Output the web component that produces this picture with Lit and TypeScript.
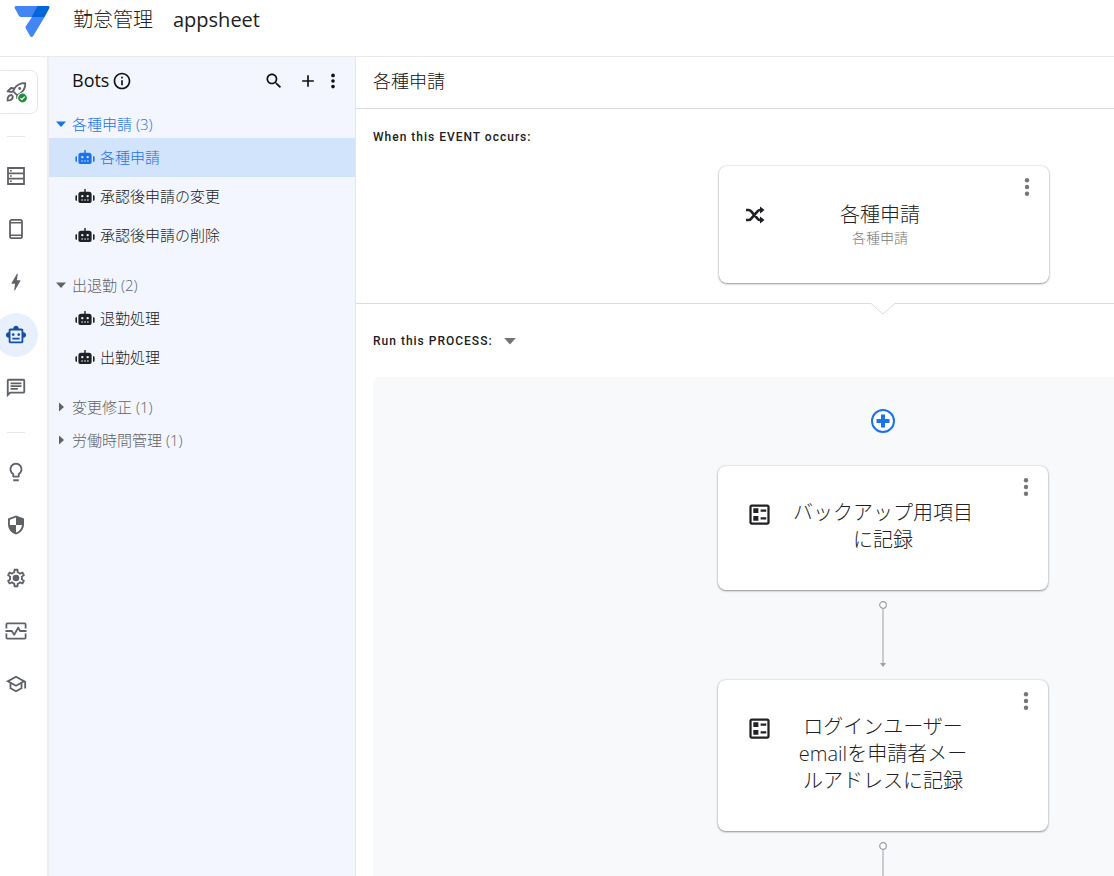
import { LitElement, html, svg, css, nothing, type TemplateResult } from "lit";
import { customElement, property, state } from "lit/decorators.js";
import { classMap } from "lit/directives/class-map.js";

/* ---------- icons ---------- */

interface Glyph {
  box: string;
  body: TemplateResult;
}

const ICONS: Record<string, Glyph> = {
  logo: {
    box: "0 0 36 33",
    body: svg`
      <path fill="#4285f4" d="M2 1h22l-6 11H6.500L5 11 .8 3.200C.2 2 .8 1 2 1z"/>
      <path fill="#0066da" d="M23.500 1h10.800c1.100 0 1.600 1 1.100 2l-4.800 9H17.500z"/>
      <path fill="#4285f4" d="M18 12h12.600L19.200 31c-.8 1.300-2.400 1.300-3.100 0l-4.300-7.600c-.4-.8-.4-1.500 0-2.200z"/>`,
  },
  rocket: {
    box: "0 0 22 22",
    body: svg`
      <g fill="none" stroke="#5f6368" stroke-width="1.800" stroke-linejoin="round">
        <path d="M20.300 2.200c-4.500-.2-8.500 1.800-10.900 5.400l-1.400 2.600 4 4 2.700-1.400c3.400-2.400 5.800-5.900 5.600-10.600z"/>
        <path d="M9.500 7.500 6 7 2.500 10.400l5.200.6M12 14.600l.2 3.400"/>
        <path d="M6.500 14c-2.600 0-4 1.500-4 5.500 4 0 5.300-1.500 5.300-4z"/>
      </g>
      <circle cx="14.700" cy="7.500" r="1.400" fill="#5f6368"/>
      <circle cx="17.500" cy="17" r="5.400" fill="#fff"/>
      <circle cx="17.500" cy="17" r="4.400" fill="#1e8e3e"/>
      <path d="m15.400 17.100 1.500 1.500 2.800-2.900" fill="none" stroke="#fff" stroke-width="1.200"/>`,
  },
  data: {
    box: "0 0 22 22",
    body: svg`
      <path fill="none" stroke="currentColor" stroke-width="1.800" d="M3 3h16v16H3zM3 8.300h16M3 13.700h16"/>
      <path d="M5 4.900h1.800v1.600H5zM5 10.200h1.800v1.600H5zM5 15.500h1.800v1.600H5z"/>`,
  },
  phone: {
    box: "0 0 22 22",
    body: svg`
      <rect x="5" y="1.900" width="12" height="18.200" rx="1.600" fill="none" stroke="currentColor" stroke-width="1.800"/>
      <path d="M5 4.800h12M5 17.200h12" stroke="currentColor" stroke-width="1.400"/>`,
  },
  bolt: {
    box: "0 0 24 24",
    body: svg`<path d="M11 21h-1l1-7H7.500c-.58 0-.57-.32-.38-.66l.07-.12C8.480 10.940 10.420 7.540 13 3h1l-1 7h3.500c.49 0 .56.33.47.51l-.07.15C12.960 17.550 11 21 11 21z"/>`,
  },
  bot: {
    box: "0 0 24 24",
    body: svg`<path d="M20 9V7c0-1.100-.9-2-2-2h-3c0-1.660-1.340-3-3-3S9 3.340 9 5H6c-1.100 0-2 .9-2 2v2c-1.660 0-3 1.340-3 3s1.340 3 3 3v4c0 1.100.9 2 2 2h12c1.100 0 2-.9 2-2v-4c1.660 0 3-1.340 3-3s-1.340-3-3-3zm-2 10H6V7h12v12zm-9-6c-.83 0-1.500-.67-1.500-1.500S8.170 10 9 10s1.500.67 1.500 1.500S9.830 13 9 13zm7.500-1.500c0 .83-.67 1.500-1.500 1.500s-1.500-.67-1.500-1.500.67-1.500 1.500-1.500 1.500.67 1.500 1.500zM8 15h8v2H8v-2z"/>`,
  },
  chat: {
    box: "0 0 24 24",
    body: svg`<path d="M4 4h16v12H5.170L4 17.170V4m0-2c-1.100 0-1.990.9-1.990 2L2 22l4-4h14c1.100 0 2-.9 2-2V4c0-1.100-.9-2-2-2H4zm2 10h8v2H6v-2zm0-3h12v2H6V9zm0-3h12v2H6V6z"/>`,
  },
  bulb: {
    box: "0 0 24 24",
    body: svg`<path d="M9 20h6v2H9zm3-18C8.140 2 5 5.140 5 9c0 2.380 1.190 4.470 3 5.740V17c0 .55.45 1 1 1h6c.55 0 1-.45 1-1v-2.260c1.810-1.270 3-3.360 3-5.740 0-3.860-3.140-7-7-7zm2.850 11.100l-.85.6V16h-4v-2.300l-.85-.6C7.800 12.160 7 10.630 7 9c0-2.760 2.240-5 5-5s5 2.240 5 5c0 1.630-.8 3.160-2.150 4.100z"/>`,
  },
  shield: {
    box: "0 0 22 22",
    body: svg`<path fill-rule="evenodd" d="M11 1.500 3 4.500v5.800c0 4.900 3.400 9 8 10.200 4.600-1.200 8-5.300 8-10.200V4.500zM11 3.500V11H4.900V5.800zM11 11h6c-.4 3.500-2.800 6.500-6 7.600z"/>`,
  },
  gear: {
    box: "0 0 24 24",
    body: svg`
      <path d="M19.430 12.980c.04-.32.07-.64.07-.98s-.03-.66-.07-.98l2.110-1.650c.19-.15.24-.42.12-.64l-2-3.460c-.09-.16-.26-.25-.44-.25-.06 0-.12.01-.17.03l-2.490 1c-.52-.4-1.080-.73-1.690-.98l-.38-2.650C14.460 2.180 14.250 2 14 2h-4c-.25 0-.46.18-.49.42l-.38 2.650c-.61.25-1.170.59-1.690.98l-2.490-1c-.06-.02-.12-.03-.18-.03-.17 0-.34.09-.43.25l-2 3.460c-.13.22-.07.49.12.64l2.110 1.650c-.04.32-.07.65-.07.98s.03.66.07.98l-2.110 1.650c-.19.15-.24.42-.12.64l2 3.460c.09.16.26.25.44.25.06 0 .12-.01.17-.03l2.490-1c.52.4 1.080.73 1.690.98l.38 2.650c.03.24.24.42.49.42h4c.25 0 .46-.18.49-.42l.38-2.650c.61-.25 1.170-.59 1.690-.98l2.490 1c.06.02.12.03.18.03.17 0 .34-.09.43-.25l2-3.460c.12-.22.07-.49-.12-.64l-2.110-1.650zm-1.980-1.710c.04.31.05.52.05.73 0 .21-.02.43-.05.73l-.14 1.130.89.7 1.080.84-.7 1.210-1.270-.51-1.040-.42-.9.68c-.43.32-.84.56-1.250.73l-1.060.43-.16 1.130-.2 1.350h-1.400l-.19-1.350-.16-1.130-1.060-.43c-.43-.18-.83-.41-1.230-.71l-.91-.7-1.060.43-1.270.51-.7-1.210 1.080-.84.89-.7-.14-1.130c-.03-.31-.05-.54-.05-.74s.02-.43.05-.73l.14-1.130-.89-.7-1.080-.84.7-1.210 1.270.51 1.040.42.9-.68c.43-.32.84-.56 1.250-.73l1.060-.43.16-1.130.2-1.350h1.390l.19 1.350.16 1.130 1.060.43c.43.18.83.41 1.230.71l.91.7 1.060-.43 1.270-.51.7 1.210-1.070.85-.89.7.14 1.130z"/>
      <circle cx="12" cy="12" r="3.600"/>`,
  },
  monitor: {
    box: "0 0 22 22",
    body: svg`<path fill="none" stroke="currentColor" stroke-width="1.800" stroke-linejoin="round" d="M1.400 8.500V4.400q0-1 1-1h17.200q1 0 1 1v4.100M1.400 13.500v4.100q0 1 1 1h17.200q1 0 1-1v-4.100M.5 11h6.300l2.400 3.800 4-7.200 1.900 3.400h6.400"/>`,
  },
  school: {
    box: "0 0 24 24",
    body: svg`<path d="M12 3L1 9l4 2.180v6L12 21l7-3.820v-6l2-1.090V17h2V9L12 3zm6.820 6L12 12.720 5.180 9 12 5.280 18.820 9zM17 15.990l-5 2.730-5-2.730v-3.720L12 15l5-2.730v3.720z"/>`,
  },
  info: {
    box: "0 0 24 24",
    body: svg`<path d="M11 7h2v2h-2zm0 4h2v6h-2zm1-9C6.480 2 2 6.480 2 12s4.480 10 10 10 10-4.480 10-10S17.520 2 12 2zm0 18c-4.410 0-8-3.590-8-8s3.590-8 8-8 8 3.590 8 8-3.590 8-8 8z"/>`,
  },
  search: {
    box: "0 0 24 24",
    body: svg`<path d="M15.500 14h-.79l-.28-.27C15.410 12.590 16 11.110 16 9.500 16 5.910 13.090 3 9.500 3S3 5.910 3 9.500 5.910 16 9.500 16c1.610 0 3.090-.59 4.230-1.570l.27.28v.79l5 4.990L20.490 19l-4.990-5zm-6 0C7.010 14 5 11.990 5 9.500S7.010 5 9.500 5 14 7.010 14 9.500 11.990 14 9.500 14z"/>`,
  },
  plus: {
    box: "0 0 24 24",
    body: svg`<path d="M19 13h-6v6h-2v-6H5v-2h6V5h2v6h6v2z"/>`,
  },
  more: {
    box: "0 0 24 24",
    body: svg`<circle cx="12" cy="5.300" r="2.200"/><circle cx="12" cy="12" r="2.200"/><circle cx="12" cy="18.700" r="2.200"/>`,
  },
  down: { box: "0 0 12 12", body: svg`<path d="M1 3.500h10L6 9z"/>` },
  right: { box: "0 0 12 12", body: svg`<path d="M4 1.500v9L9 6z"/>` },
  robot: {
    box: "0 0 20 18",
    body: svg`
      <path fill-rule="evenodd" d="M9.300 2h1.400v2.700H14q2.600 0 2.600 2.600v6.900q0 1.800-1.800 1.800H5.200q-1.800 0-1.800-1.800V7.300Q3.400 4.700 6 4.700h3.300zM7.300 7.900a1.200 1.200 0 1 0 0 2.400 1.200 1.200 0 0 0 0-2.400zm5.400 0a1.200 1.200 0 1 0 0 2.400 1.200 1.200 0 0 0 0-2.400zM6.300 12.500v1h1.700v-1zm2.900 0v1h1.700v-1zm2.800 0v1h1.700v-1z"/>
      <path d="M2 8.300v5.500H1.300q-.9-.2-.9-1V9.200q0-.9.9-.9zM18 8.300v5.500h.7q.9-.2.9-1V9.200q0-.9-.9-.9z"/>`,
  },
  shuffle: {
    box: "0 0 20 18",
    body: svg`
      <path fill="none" stroke="currentColor" stroke-width="2.600" d="M1 4h2.500Q5 4 6 5.200l6.500 7.400q1.200 1.400 2.500 1.400h1M1 14h2.500Q5 14 6 12.800l6.500-7.400Q13.700 4 15 4h1"/>
      <path d="M15 .5 19.500 4 15 7.500zM15 10.500l4.500 3.500-4.500 3.500z"/>`,
  },
  ballot: {
    box: "0 0 24 24",
    body: svg`<path d="M13 7.500h5v2h-5zm0 7h5v2h-5zM19 3H5c-1.100 0-2 .9-2 2v14c0 1.100.9 2 2 2h14c1.100 0 2-.9 2-2V5c0-1.100-.9-2-2-2zm0 16H5V5h14v14zM11 6.500H6.500v4.200H11v-4.200zm0 6.800H6.500v4.200H11v-4.200z"/>`,
  },
  addStep: {
    box: "0 0 26 26",
    body: svg`
      <circle cx="13" cy="13" r="11" fill="#fff" stroke="currentColor" stroke-width="2"/>
      <path d="M11 6.500h4V11h4.500v4H15v4.500h-4V15H6.500v-4H11z"/>`,
  },
  arrow: {
    box: "0 0 10 68",
    body: svg`
      <circle cx="5" cy="5" r="3.300" fill="#fff" stroke="#9aa0a6" stroke-width="1.200"/>
      <path d="M5 8.500V63" stroke="#9aa0a6"/>
      <path fill="#9aa0a6" d="M2 63h6l-3 4z"/>`,
  },
};

@customElement("ui-icon")
export class UiIcon extends LitElement {
  @property() name = "";

  static styles = css`
    :host {
      display: block;
      flex: none;
      width: 24px;
      height: 24px;
    }
    .glyph {
      display: block;
      width: 100%;
      height: 100%;
      fill: currentColor;
    }
  `;

  render() {
    const icon = ICONS[this.name];
    if (!icon) return nothing;
    return html`<svg class="glyph" viewBox=${icon.box} aria-hidden="true">${icon.body}</svg>`;
  }
}

const controls = css`
  *,
  *::before,
  *::after {
    box-sizing: border-box;
  }
  button {
    margin: 0;
    padding: 0;
    border: 0;
    background: none;
    color: inherit;
    font: inherit;
    text-align: inherit;
    cursor: pointer;
  }
  a {
    color: inherit;
    text-decoration: none;
  }
  h1,
  h2,
  h3,
  p,
  ul {
    margin: 0;
    padding: 0;
    font-weight: inherit;
    list-style: none;
  }
`;

/* ---------- left icon rail ---------- */

@customElement("nav-rail")
export class NavRail extends LitElement {
  @state() private current = "bot";

  private groups = [
    [
      ["data", "Data"],
      ["phone", "Views"],
      ["bolt", "Actions"],
      ["bot", "Automation"],
      ["chat", "Chat apps"],
    ],
    [
      ["bulb", "Intelligence"],
      ["shield", "Security"],
      ["gear", "Settings"],
      ["monitor", "Manage"],
      ["school", "Learn"],
    ],
  ];

  static styles = [
    controls,
    css`
      :host {
        display: block;
        padding: 13px 15px 0 0;
        border-right: 2px solid #ececee;
        color: #5f6368;
        background: #fff;
      }
      .rail {
        display: flex;
        flex-direction: column;
        align-items: center;
        width: 32px;
      }
      .group {
        display: flex;
        flex-direction: column;
        align-items: center;
        gap: 9px;
      }
      .entry {
        display: grid;
        place-items: center;
        width: 44px;
        height: 44px;
        border-radius: 22px;
      }
      .glyph {
        width: 22px;
        height: 22px;
      }
      .current {
        color: #174ea6;
        background: #e8f0fe;
      }
      .deploy {
        border: 1px solid #e4e6e9;
        border-radius: 8px;
      }
      .rule {
        width: 18px;
        height: 1px;
        margin: 22px 0 17px;
        background: #e4e6e9;
      }
    `,
  ];

  render() {
    return html`
      <nav class="rail" aria-label="Editor">
        <button class="entry deploy" aria-label="Deploy">
          <ui-icon class="glyph" name="rocket"></ui-icon>
        </button>
        ${this.groups.map(
          (group) => html`
            <div class="rule"></div>
            <div class="group">
              ${group.map(
                ([name, label]) => html`
                  <button
                    class=${classMap({ entry: true, current: name === this.current })}
                    aria-label=${label}
                    @click=${() => (this.current = name)}
                  >
                    <ui-icon class="glyph" name=${name}></ui-icon>
                  </button>
                `,
              )}
            </div>
          `,
        )}
      </nav>
    `;
  }
}

/* ---------- bot list ---------- */

interface BotGroup {
  name: string;
  count: number;
  open: boolean;
  bots: string[];
}

@customElement("bot-panel")
export class BotPanel extends LitElement {
  @state() private selected = "各種申請";
  @state() private groups: BotGroup[] = [
    { name: "各種申請", count: 3, open: true, bots: ["各種申請", "承認後申請の変更", "承認後申請の削除"] },
    { name: "出退勤", count: 2, open: true, bots: ["退勤処理", "出勤処理"] },
    { name: "変更修正", count: 1, open: false, bots: [] },
    { name: "労働時間管理", count: 1, open: false, bots: [] },
  ];

  static styles = [
    controls,
    css`
      :host {
        display: block;
        border-right: 1px solid #e4e6eb;
        background: #f3f6fe;
        color: #202124;
        font-size: 15px;
        line-height: 24px;
      }
      .head {
        display: flex;
        align-items: center;
        height: 48px;
        padding: 0 12px 0 23px;
        color: #111;
      }
      .title {
        padding-bottom: 2px;
        font-size: 18px;
        font-weight: 400;
      }
      .info {
        margin: 0 auto 0 3px;
      }
      .info ui-icon {
        width: 20px;
        height: 20px;
      }
      .tools {
        display: flex;
        align-items: center;
        gap: 14px;
      }
      .tools ui-icon {
        width: 20px;
        height: 20px;
      }
      .tools .menu {
        margin-left: -9px;
      }
      .tree {
        padding-top: 5px;
      }
      .group {
        margin-bottom: 5px;
      }
      .toggle {
        display: flex;
        align-items: center;
        gap: 5px;
        width: 100%;
        height: 28px;
        padding-left: 6px;
        color: #5f6368;
      }
      .toggle ui-icon {
        width: 12px;
        height: 12px;
      }
      .active {
        color: #1a73e8;
      }
      .bots {
        padding-bottom: 11px;
      }
      .bot {
        display: flex;
        align-items: center;
        gap: 5px;
        height: 39px;
        padding: 0 0 2px 26px;
      }
      .bot ui-icon {
        width: 20px;
        height: 18px;
      }
      .selected {
        background: #d2e3fc;
        color: #1a73e8;
      }
    `,
  ];

  private toggle(target: BotGroup) {
    this.groups = this.groups.map((g) => (g === target ? { ...g, open: !g.open } : g));
  }

  private select(event: Event, bot: string) {
    event.preventDefault();
    this.selected = bot;
  }

  render() {
    return html`
      <header class="head">
        <h2 class="title">Bots</h2>
        <button class="info" aria-label="About bots"><ui-icon name="info"></ui-icon></button>
        <div class="tools">
          <button aria-label="Search"><ui-icon name="search"></ui-icon></button>
          <button aria-label="Add bot"><ui-icon name="plus"></ui-icon></button>
          <button class="menu" aria-label="More"><ui-icon name="more"></ui-icon></button>
        </div>
      </header>
      <div class="tree">
        ${this.groups.map(
          (group) => html`
            <section class="group">
              <button
                class=${classMap({ toggle: true, active: group.bots.includes(this.selected) })}
                aria-expanded=${group.open ? "true" : "false"}
                @click=${() => this.toggle(group)}
              >
                <ui-icon name=${group.open ? "down" : "right"}></ui-icon>
                <span>${group.name} (${group.count})</span>
              </button>
              ${group.open
                ? html`<ul class="bots">
                    ${group.bots.map(
                      (bot) => html`
                        <li>
                          <a
                            class=${classMap({ bot: true, selected: bot === this.selected })}
                            href="#"
                            @click=${(e: Event) => this.select(e, bot)}
                          >
                            <ui-icon name="robot"></ui-icon>
                            <span>${bot}</span>
                          </a>
                        </li>
                      `,
                    )}
                  </ul>`
                : nothing}
            </section>
          `,
        )}
      </div>
    `;
  }
}

/* ---------- flow cards ---------- */

@customElement("flow-card")
export class FlowCard extends LitElement {
  @property() icon = "";
  @property() heading = "";
  @property() detail = "";
  @property({ reflect: true }) kind = "step";

  static styles = [
    controls,
    css`
      :host {
        display: grid;
        grid-template-columns: 70px 1fr 70px;
        width: 330px;
        border-radius: 8px;
        background: #fff;
        box-shadow:
          0 1px 2px rgba(60, 64, 67, 0.5),
          0 0 2px rgba(60, 64, 67, 0.25);
        color: #202124;
      }
      :host([kind="event"]) {
        grid-template-columns: 62px 1fr 70px;
      }
      .mark {
        display: flex;
        justify-content: center;
        align-items: flex-start;
        padding: 35px 0 0 12px;
      }
      .mark ui-icon {
        width: 27px;
        height: 27px;
      }
      :host([kind="event"]) .mark {
        padding: 40px 0 0 10px;
      }
      :host([kind="event"]) .mark ui-icon {
        width: 20px;
        height: 18px;
      }
      .text {
        padding: 33px 3px 37px;
        text-align: center;
      }
      :host([kind="event"]) .text {
        padding: 35px 0;
      }
      .heading {
        font-size: 20px;
        line-height: 27px;
      }
      .detail {
        font-size: 14px;
        line-height: 20px;
        color: #757575;
      }
      .menu {
        justify-self: end;
        align-self: start;
        margin: 9px 10px;
        color: #757575;
      }
      .menu ui-icon {
        width: 24px;
        height: 24px;
      }
    `,
  ];

  render() {
    return html`
      <div class="mark"><ui-icon name=${this.icon}></ui-icon></div>
      <div class="text">
        <h3 class="heading">${this.heading}</h3>
        ${this.detail ? html`<p class="detail">${this.detail}</p>` : nothing}
      </div>
      <button class="menu" aria-label="More"><ui-icon name="more"></ui-icon></button>
    `;
  }
}

/* ---------- page ---------- */

@customElement("app-root")
export class AppRoot extends LitElement {
  private steps = ["バックアップ用項目に記録", "ログインユーザーemailを申請者メールアドレスに記録"];

  static styles = [
    controls,
    css`
      :host {
        display: grid;
        grid-template-rows: auto minmax(0, 1fr);
        height: 100vh;
        overflow: hidden;
        background: #fff;
        color: #202124;
        font-family: "Open Sans", "Noto Sans CJK JP", sans-serif;
        font-weight: 300;
      }
      .top {
        display: flex;
        align-items: flex-start;
        gap: 23px;
        height: 57px;
        padding: 5px 14px 0;
        border-bottom: 1px solid #e8eaed;
      }
      .logo {
        width: 36px;
        height: 33px;
      }
      .app {
        display: flex;
        gap: 20px;
        font-size: 20px;
        line-height: 30px;
      }
      .owner {
        font-weight: 400;
      }
      .body {
        display: grid;
        grid-template-columns: auto 307px minmax(0, 1fr);
        min-height: 0;
      }
      .main {
        overflow: hidden;
      }
      .bar {
        height: 52px;
        padding: 0 17px;
        border-bottom: 1px solid #dadce0;
        font-size: 18px;
        line-height: 48px;
        color: #111;
      }
      .content {
        min-width: 1054px;
      }
      .caption {
        font-family: Roboto, "Noto Sans CJK JP", sans-serif;
        font-size: 12px;
        font-weight: 500;
        line-height: 20px;
        letter-spacing: 1px;
      }
      .event {
        display: flex;
        flex-direction: column;
        padding: 18px 15px 20px 17px;
      }
      .event flow-card {
        align-self: center;
        margin-top: 19px;
      }
      .divider {
        display: flex;
        align-items: flex-start;
        height: 12px;
      }
      .line {
        flex: 1;
        height: 1px;
        background: #dadce0;
      }
      .notch {
        display: block;
        width: 26px;
        height: 12px;
        fill: none;
        stroke: #dadce0;
      }
      .process {
        padding: 16px 17px 0;
      }
      .picker {
        display: flex;
        align-items: center;
        gap: 10px;
      }
      .picker ui-icon {
        width: 14px;
        height: 14px;
        color: #757575;
      }
      .flow {
        display: flex;
        flex-direction: column;
        align-items: center;
        margin-top: 26px;
        padding: 31px 0 40px;
        border-radius: 6px;
        background: #f8f9fb;
      }
      .add {
        margin-bottom: 32px;
        color: #1a73e8;
      }
      .add ui-icon {
        width: 26px;
        height: 26px;
      }
      .link {
        width: 10px;
        height: 68px;
        margin: 10px 0 12px;
      }
    `,
  ];

  render() {
    return html`
      <header class="top">
        <a href="#" aria-label="Home"><ui-icon class="logo" name="logo"></ui-icon></a>
        <h1 class="app"><span>勤怠管理</span><span class="owner">appsheet</span></h1>
      </header>
      <div class="body">
        <nav-rail></nav-rail>
        <bot-panel></bot-panel>
        <main class="main">
          <h2 class="bar">各種申請</h2>
          <div class="content">
            <section class="event">
              <p class="caption">When this EVENT occurs:</p>
              <flow-card kind="event" icon="shuffle" heading="各種申請" detail="各種申請"></flow-card>
            </section>
            <div class="divider">
              <div class="line"></div>
              <svg class="notch" viewBox="0 0 26 12" aria-hidden="true"><path d="M0 .5h1L13 11 25 .5h1" /></svg>
              <div class="line"></div>
            </div>
            <section class="process">
              <button class="picker caption">
                <span>Run this PROCESS:</span><ui-icon name="down"></ui-icon>
              </button>
              <div class="flow">
                <button class="add" aria-label="Add step"><ui-icon name="addStep"></ui-icon></button>
                ${this.steps.map(
                  (step) => html`
                    <flow-card icon="ballot" heading=${step}></flow-card>
                    <ui-icon class="link" name="arrow"></ui-icon>
                  `,
                )}
              </div>
            </section>
          </div>
        </main>
      </div>
    `;
  }
}
